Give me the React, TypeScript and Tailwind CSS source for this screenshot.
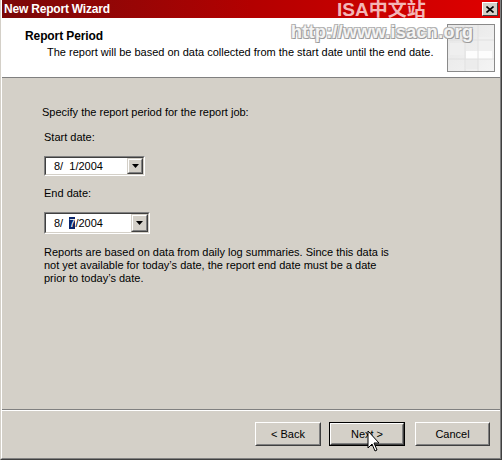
import React from "react";

const font = { fontFamily: '"Liberation Sans", Arial, sans-serif' };

function Sunken({ className, children }: { className: string; children: React.ReactNode }) {
  return (
    <div className={`border border-t-[#808080] border-l-[#808080] border-b-white border-r-white ${className}`}>
      <div className="h-full border border-t-[#404040] border-l-[#404040] border-b-[#d4d0c8] border-r-[#d4d0c8] bg-white flex items-center">
        {children}
      </div>
    </div>
  );
}

function DropBtn({ className }: { className: string }) {
  return (
    <div className={`border border-t-[#d4d0c8] border-l-[#d4d0c8] border-b-[#404040] border-r-[#404040] ${className}`}>
      <div className="h-full border border-t-white border-l-white border-b-[#808080] border-r-[#808080] bg-[#d4d0c8] flex items-center justify-center">
        <svg width="7" height="4" viewBox="0 0 7 4"><path d="M0 0h7L3.5 4z" fill="#000" /></svg>
      </div>
    </div>
  );
}

function Button({ label, className, focused }: { label: string; className: string; focused?: boolean }) {
  const inner = (
    <div className="h-full border border-t-white border-l-white border-b-[#404040] border-r-[#404040]">
      <div className="h-full border border-t-[#d4d0c8] border-l-[#d4d0c8] border-b-[#808080] border-r-[#808080] bg-[#d4d0c8] flex items-center justify-center text-[11px] text-black">
        {label}
      </div>
    </div>
  );
  return focused ? (
    <div className={`border border-black ${className}`}>{inner}</div>
  ) : (
    <div className={className}>{inner}</div>
  );
}

export default function App() {
  return (
    <div style={font} className="relative w-[502px] h-[460px] bg-[#d4d0c8] flex flex-col overflow-hidden border-l border-l-[#d4d0c8] border-r border-r-[#404040] border-b border-b-[#404040]">
      <div className="flex-1 flex flex-col border-l border-l-white border-r border-r-[#808080] border-b border-b-[#808080]">
        {/* Title bar */}
        <div className="h-[18px] flex items-center justify-between pl-[2px] pr-[2px] bg-gradient-to-r from-[#7a0808] via-[#b30000] to-[#e00000]">
          <span className="text-white font-bold text-[12px] tracking-[-0.2px]">New Report Wizard</span>
          <div className="w-[16px] h-[14px] border border-t-white border-l-white border-b-[#404040] border-r-[#404040] bg-[#d4d0c8] flex items-center justify-center">
            <svg width="8" height="7" viewBox="0 0 8 7">
              <path d="M0.5 0.5L7.5 6.5M7.5 0.5L0.5 6.5" stroke="#000" strokeWidth="1.6" />
            </svg>
          </div>
        </div>
        {/* Header */}
        <div className="h-[60px] bg-white border-b border-b-[#808080] flex items-start justify-between pl-[23px] pr-[5px]">
          <div className="pt-[11px]">
            <div className="font-bold text-[12px] text-black leading-[14px] tracking-[-0.1px]">Report Period</div>
            <div className="pl-[22px] pt-[2px] text-[11px] text-black leading-[14px]">
              The report will be based on data collected from the start date until the end date.
            </div>
          </div>
          <div className="mt-[6px] w-[48px] h-[48px] border border-[#8a8a8a]">
            <svg width="46" height="46" viewBox="0 0 46 46">
              <defs>
                <linearGradient id="g" x1="0" y1="0" x2="1" y2="1">
                  <stop offset="0" stopColor="#e6e6e6" />
                  <stop offset="1" stopColor="#f4f4f4" />
                </linearGradient>
              </defs>
              <rect width="46" height="46" fill="url(#g)" />
              <rect x="2" y="18" width="16" height="12" fill="#efefef" />
              <rect x="18" y="26" width="26" height="8" fill="#fdfdfd" />
              <rect x="30" y="12" width="14" height="14" fill="#f0f0f0" />
              <rect x="18" y="34" width="12" height="10" fill="#ececec" />
              <path d="M0 15h46M17 0v46M30 0v46M0 34h46" stroke="#e0e0e0" strokeWidth="1" />
            </svg>
          </div>
        </div>
        {/* Body */}
        <div className="flex-1 flex flex-col pl-[40px] pt-[28px] text-[11px] text-black">
          <div className="leading-[13px]">Specify the report period for the report job:</div>
          <div className="pl-[2px] pt-[12px] leading-[13px]">Start date:</div>
          <Sunken className="ml-[2px] mt-[12px] w-[101px] h-[20px]">
            <span className="pl-[8px] flex-1 leading-[13px]">8/&nbsp;&nbsp;1/2004</span>
            <DropBtn className="w-[16px] h-full" />
          </Sunken>
          <div className="pl-[2px] pt-[11px] leading-[13px]">End date:</div>
          <Sunken className="ml-[2px] mt-[12px] w-[106px] h-[22px]">
            <span className="pl-[8px] flex-1 leading-[13px]">
              8/&nbsp;&nbsp;<span className="bg-[#0a246a] text-white">7</span>/2004
            </span>
            <DropBtn className="w-[17px] h-full" />
          </Sunken>
          <div className="pl-[2px] pt-[12px] leading-[13px] w-[352px]">
            Reports are based on data from daily log summaries. Since this data is not yet available for today’s date, the report end date must be a date prior to today’s date.
          </div>
        </div>
        {/* Separator */}
        <div className="h-[2px] border-t border-t-[#808080] border-b border-b-white" />
        {/* Buttons */}
        <div className="h-[47px] flex items-start pt-[11px] pl-[253px]">
          <Button label="< Back" className="w-[66px] h-[24px]" />
          <Button label="Next >" className="ml-[8px] w-[76px] h-[24px]" focused />
          <Button label="Cancel" className="ml-[10px] w-[75px] h-[24px]" />
        </div>
      </div>

      {/* Watermark overlay */}
      <div className="absolute left-[336px] top-[0px] text-[19px] font-bold leading-[20px] text-[#f3b6b6]" style={{ fontFamily: '"Liberation Sans", "Noto Sans CJK SC", sans-serif' }}>
        ISA中文站
      </div>
      <div
        className="absolute left-[290px] top-[21px] text-[18px] font-bold leading-[22px] text-[#f4f4f4] tracking-[0.3px]"
        style={{ fontFamily: '"Liberation Sans", sans-serif', textShadow: "1px 1px 0 #9a9a9a, -1px -1px 0 #b8b8b8, 1px -1px 0 #b0b0b0, -1px 1px 0 #b0b0b0" }}
      >
        http://www.isacn.org
      </div>

      {/* Mouse cursor */}
      <svg className="absolute left-[366px] top-[430px]" width="14" height="24" viewBox="0 0 14 24">
        <path d="M1 1 L1 18 L5 14 L8 21 L10 20 L7 13 L12 13 Z" fill="#fff" stroke="#000" strokeWidth="1" />
      </svg>
    </div>
  );
}
